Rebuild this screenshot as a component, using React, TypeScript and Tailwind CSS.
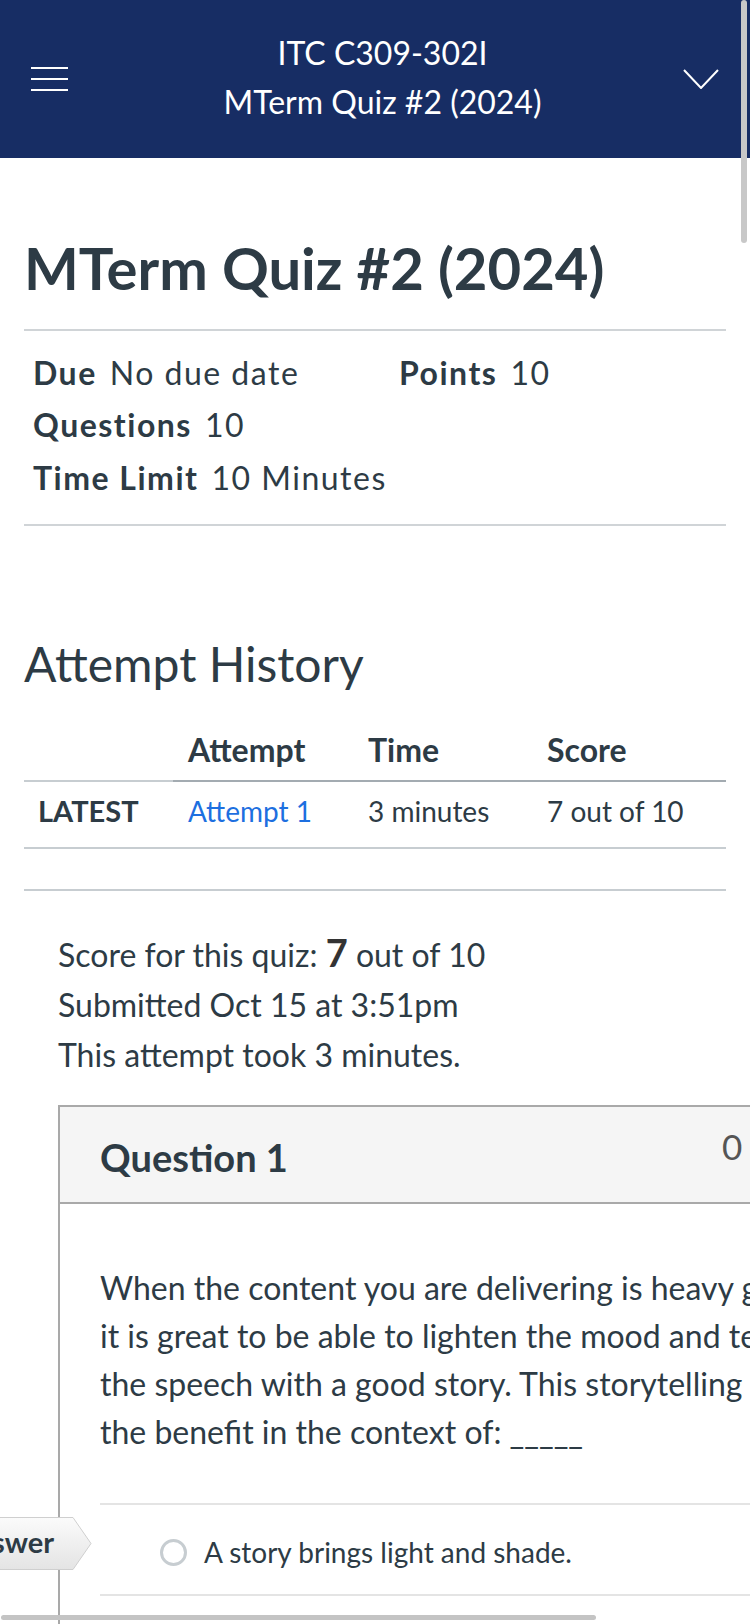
const Hamburger = () => (
  <div className="w-[37px] flex flex-col gap-[9px]">
    <div className="h-[2px] bg-white" />
    <div className="h-[2px] bg-white" />
    <div className="h-[2px] bg-white" />
  </div>
)

const Chevron = () => (
  <svg width="36" height="20" viewBox="0 0 36 20" fill="none">
    <polyline points="1,1 18,19 35,1" stroke="white" strokeWidth="2" />
  </svg>
)

// the "Correct Answer" arrow tag that sticks out left of the question box
const AnswerTag = () => (
  <div className="absolute left-[-200px] top-[1517px] w-[292px] h-[53px]">
    <svg className="absolute inset-0" width="292" height="53" viewBox="0 0 292 53">
      <defs>
        <linearGradient id="tag" x1="0" y1="0" x2="0" y2="1">
          <stop offset="0" stopColor="#fbfbfb" />
          <stop offset="1" stopColor="#e4e4e4" />
        </linearGradient>
      </defs>
      <polygon points="0.5,0.5 273,0.5 291,26.5 273,52.5 0.5,52.5" fill="url(#tag)" stroke="#cfcfcf" strokeWidth="1" />
    </svg>
    <div className="relative h-full flex items-center justify-end pr-[38px] text-[29px] font-bold leading-none pb-[4px]">
      Correct Answer
    </div>
  </div>
)

export default function App() {
  return (
    <div className="relative w-[750px] h-[1624px] overflow-hidden bg-white font-['Lato',sans-serif] text-[#2d3b45]">
      <header className="h-[158px] bg-[#172d64] flex items-center px-[31px] text-white">
        <Hamburger />
        <div className="flex-1 pl-[14px] -mt-[4px] text-center text-[32px] leading-[49px]">
          <div>ITC C309-302I</div>
          <div>MTerm Quiz #2 (2024)</div>
        </div>
        <Chevron />
      </header>

      <main className="px-[24px]">
        <h1 className="mt-[75px] text-[58px] font-bold leading-[1.2]">MTerm Quiz #2 (2024)</h1>
        <hr className="mt-[26px] border-t-2 border-[#d0d4d7]" />

        <div className="mt-[16px] pl-[9px] grid grid-cols-[366px_1fr] text-[32px] leading-[52.5px] tracking-[1.5px]">
          <div><span className="font-bold mr-[13px]">Due</span>No due date</div>
          <div><span className="font-bold mr-[13px]">Points</span>10</div>
          <div className="col-span-2"><span className="font-bold mr-[13px]">Questions</span>10</div>
          <div className="col-span-2"><span className="font-bold mr-[13px]">Time Limit</span>10 Minutes</div>
        </div>
        <hr className="mt-[20px] border-t-2 border-[#d0d4d7]" />

        <h2 className="mt-[109px] text-[48px] leading-[1.2]">Attempt History</h2>

        <div className="mt-[38px] grid grid-cols-[149px_180px_179px_1fr]">
          <div className="pb-[11px] border-b-2 border-[#c7cdd1]" />
          <div className="pl-[15px] pb-[11px] border-b-2 border-[#a3abb1] text-[32px] font-bold leading-[38px]">Attempt</div>
          <div className="pl-[15px] pb-[11px] border-b-2 border-[#a3abb1] text-[32px] font-bold leading-[38px]">Time</div>
          <div className="pl-[15px] pb-[11px] border-b-2 border-[#a3abb1] text-[32px] font-bold leading-[38px]">Score</div>

          <div className="pl-[14px] pt-[12px] pb-[19px] border-b-2 border-[#c7cdd1] text-[29px] font-bold leading-[34px]">LATEST</div>
          <div className="pl-[15px] pt-[12px] pb-[19px] border-b-2 border-[#c7cdd1] text-[28px] leading-[34px] text-[#1d6fe0]">Attempt 1</div>
          <div className="pl-[15px] pt-[12px] pb-[19px] border-b-2 border-[#c7cdd1] text-[28px] leading-[34px]">3 minutes</div>
          <div className="pl-[15px] pt-[12px] pb-[19px] border-b-2 border-[#c7cdd1] text-[28px] leading-[34px]">7 out of 10</div>
        </div>
        <hr className="mt-[40px] border-t-2 border-[#c7cdd1]" />

        <div className="mt-[36px] pl-[34px] text-[32px] leading-[50px]">
          <div>Score for this quiz: <span className="text-[38px] font-bold text-[#333]">7</span> out of 10</div>
          <div>Submitted Oct 15 at 3:51pm</div>
          <div>This attempt took 3 minutes.</div>
        </div>

        <div className="mt-[25px] ml-[34px] w-[820px] border-2 border-[#a9a9a9] pb-[200px]">
          <div className="h-[97px] flex items-start bg-[#f5f5f5] border-b-2 border-[#a9a9a9]">
            <div className="w-[662px] pl-[40px] pt-[28px] text-[38px] font-bold leading-[1.2]">Question 1</div>
            <div className="pt-[18px] text-[35px] leading-[1.2] text-[#555]">0 / 1 pts</div>
          </div>

          <div className="pl-[40px] pt-[60px]">
            <div className="text-[32px] leading-[48px] whitespace-nowrap">
              <div>When the content you are delivering is heavy going,</div>
              <div>it is great to be able to lighten the mood and temper</div>
              <div>the speech with a good story. This storytelling has</div>
              <div>the benefit in the context of: _____</div>
            </div>

            <div className="mt-[47px] border-t-2 border-[#e4e4e4]" />
            <div className="h-[89px] flex items-center pt-[6px]">
              <div className="ml-[60px] w-[27px] h-[27px] rounded-full border-[3px] border-[#c7cdd1]" />
              <div className="ml-[17px] text-[28px] leading-[36px]">A story brings light and shade.</div>
            </div>
            <div className="border-t-2 border-[#e4e4e4]" />
          </div>
        </div>
      </main>

      <AnswerTag />

      {/* browser scrollbars captured in the screenshot */}
      <div className="absolute top-0 right-[3px] w-[6px] h-[243px] rounded-full bg-[#c8c8c8]" />
      <div className="absolute left-[1px] top-[1615px] w-[595px] h-[5px] rounded-full bg-[#c4c4c4]" />
    </div>
  )
}
